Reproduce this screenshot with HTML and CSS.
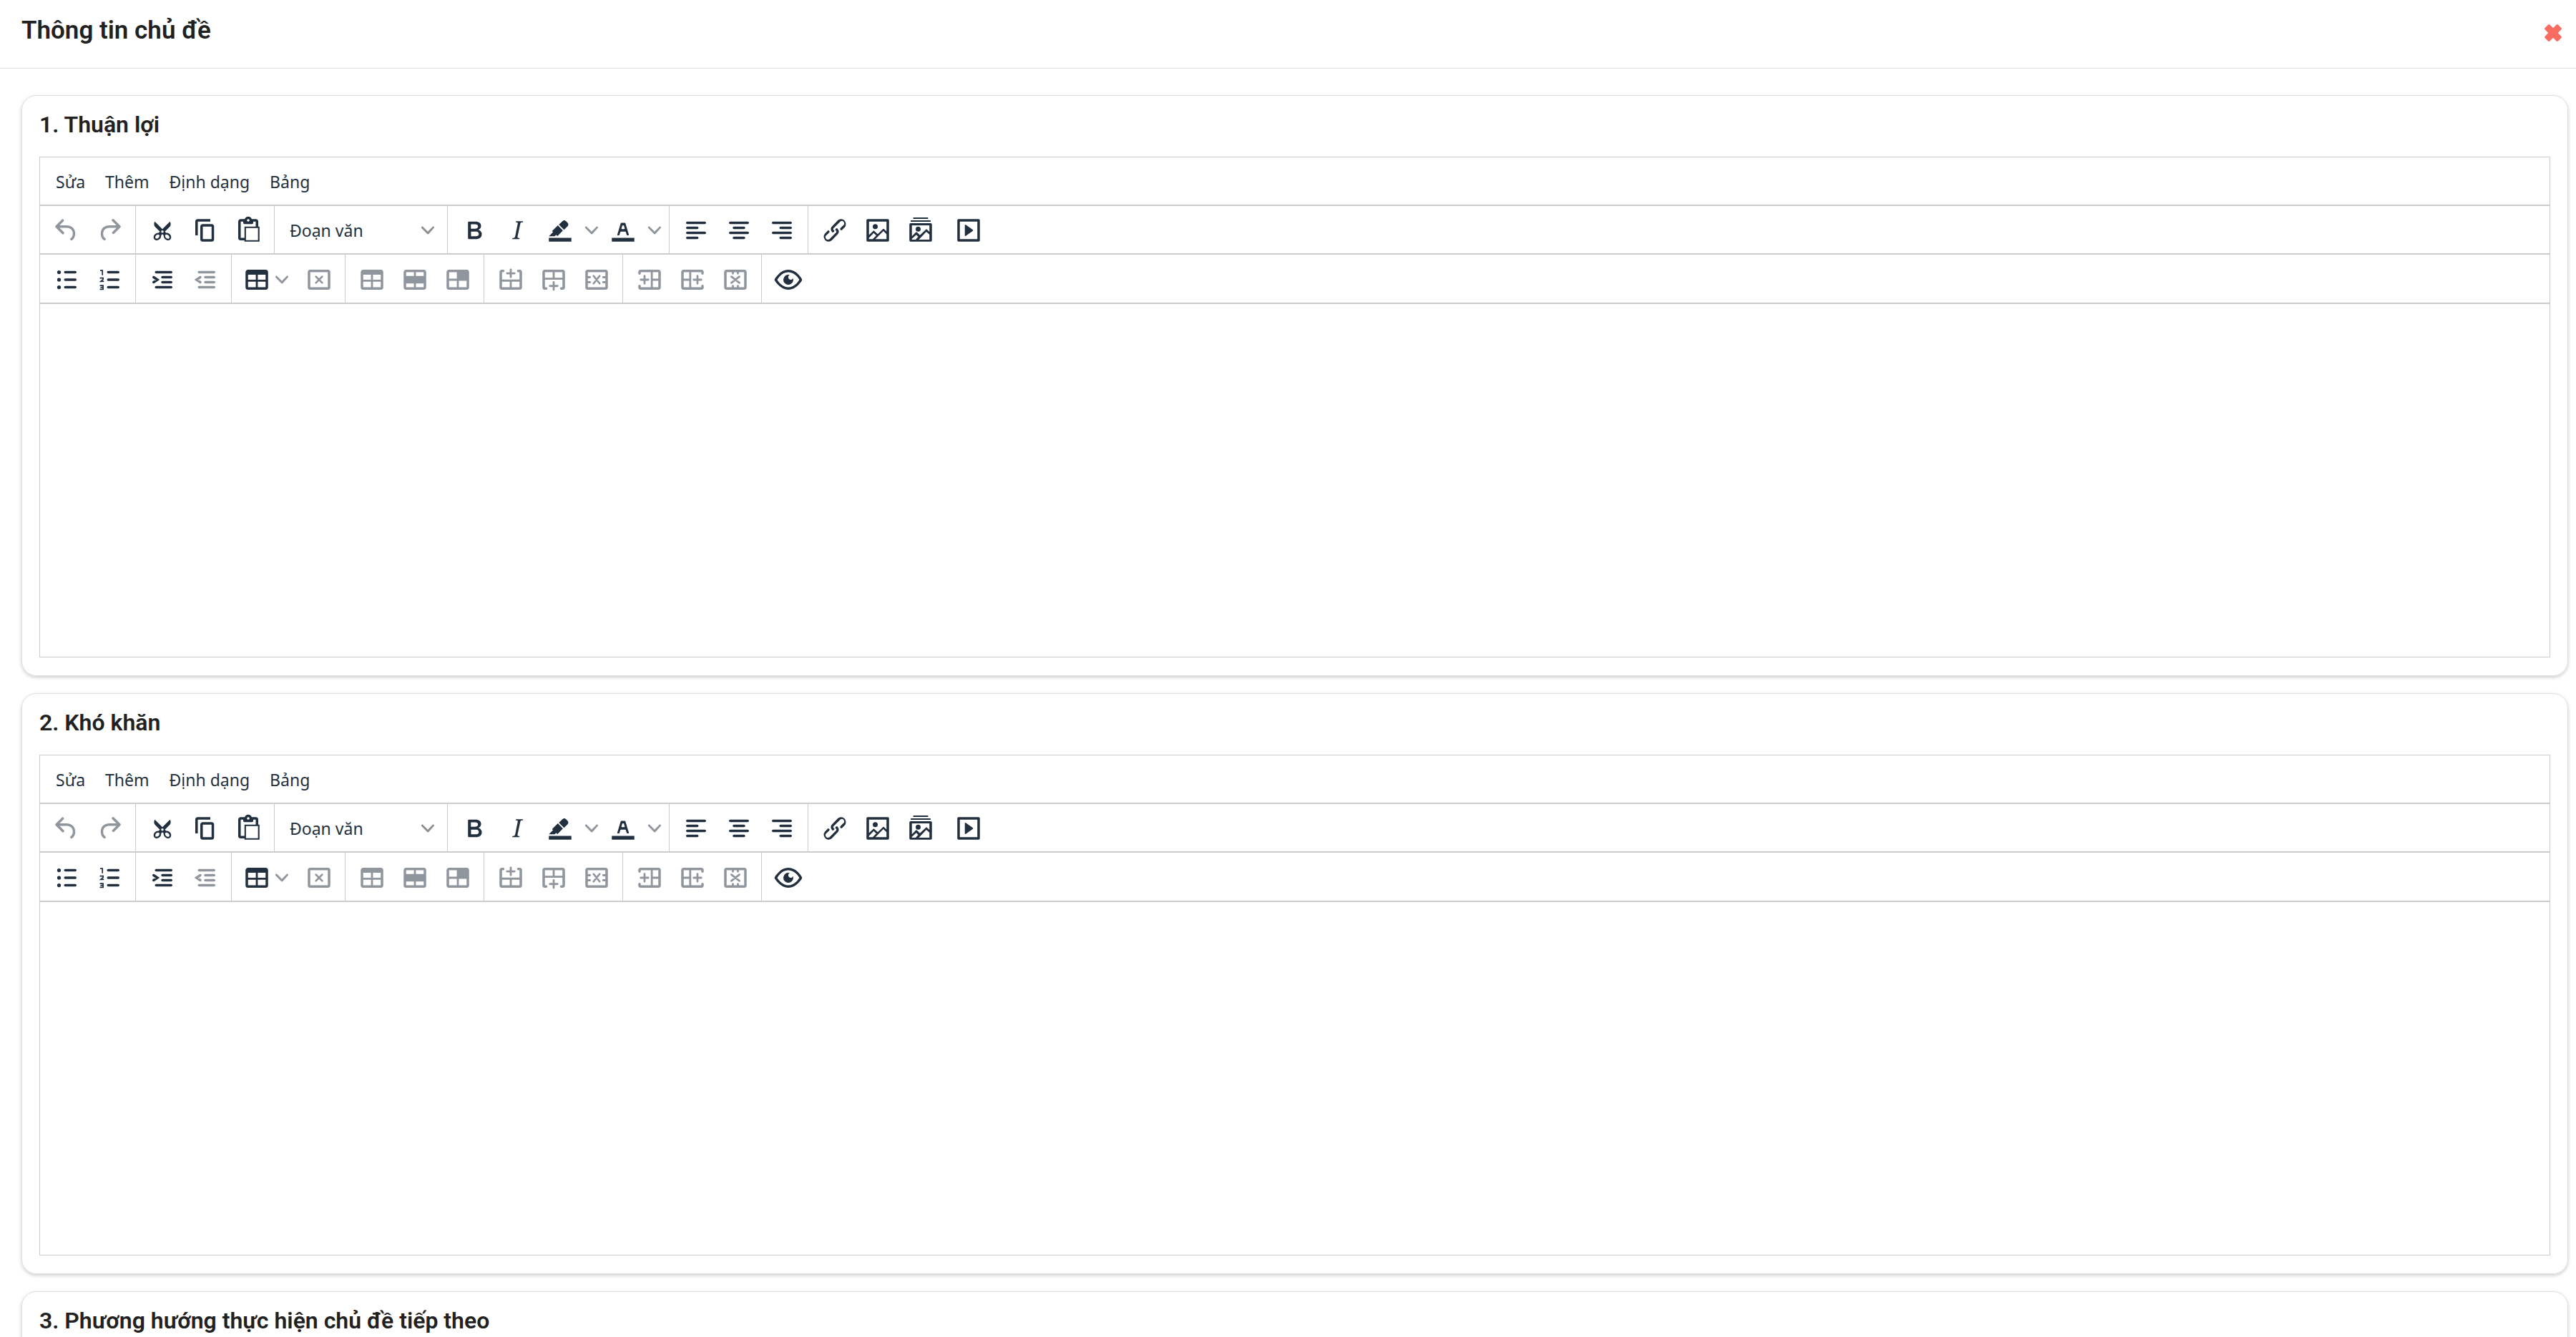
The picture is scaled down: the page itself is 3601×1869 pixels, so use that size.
FILE: index.html
```html
<!DOCTYPE html>
<html lang="vi">

<head>
    <meta charset="UTF-8">
    <meta name="viewport" content="width=device-width, initial-scale=1.0">
    <title>Thông tin chủ đề</title>
    <link rel="stylesheet" href="styles.css">
</head>

<body>
    <!-- Icons -->
    <svg class="sprite" aria-hidden="true">
        <symbol id="close" viewBox="0 0 24 24"><g transform="rotate(45 12 12)"><rect x="-1" y="7.2" width="26" height="9.6" rx="2"/><rect x="7.2" y="-1" width="9.6" height="26" rx="2"/></g></symbol>
        <symbol id="chevron" viewBox="0 0 10 10"><path d="M8.7 2.2c.3-.3.8-.3 1 0 .4.4.4.9 0 1.2L5.7 7.8c-.3.3-.9.3-1.2 0L.2 3.4a.8.8 0 010-1.2c.3-.3.8-.3 1.1 0L5 6l3.7-3.8z"/></symbol>
        <symbol id="undo" viewBox="0 0 24 24"><path d="M6.4 8H12c3.7 0 6.2 2 6.8 5.1.6 2.7-.4 5.6-2.3 6.8a1 1 0 01-1-1.8c1.1-.6 1.8-2.7 1.4-4.6-.5-2.1-2.1-3.5-4.9-3.5H6.4l3.3 3.3a1 1 0 11-1.4 1.4l-5-5a1 1 0 010-1.4l5-5a1 1 0 011.4 1.4L6.4 8z"/></symbol>
        <symbol id="redo" viewBox="0 0 24 24"><path d="M17.6 10H12c-2.8 0-4.4 1.4-4.9 3.5-.4 2 .3 4 1.4 4.6a1 1 0 11-1 1.8c-2-1.2-2.9-4.1-2.3-6.8.6-3 3-5.1 6.8-5.1h5.6l-3.3-3.3a1 1 0 111.4-1.4l5 5a1 1 0 010 1.4l-5 5a1 1 0 01-1.4-1.4l3.3-3.3z"/></symbol>
        <symbol id="cut" viewBox="0 0 24 24"><path fill-rule="evenodd" d="M18 15c.6.7 1 1.4 1 2.3 0 .8-.2 1.5-.7 2l-.8.5-1 .2c-.4 0-.8 0-1.2-.3a3.9 3.9 0 01-2.1-2.2c-.2-.5-.3-1-.2-1.5l-1-1-1 1c0 .5 0 1-.2 1.5-.1.5-.4 1-.9 1.4-.3.4-.7.6-1.2.8l-1.2.3c-.4 0-.7 0-1-.2-.3 0-.6-.3-.8-.5-.5-.5-.8-1.2-.7-2 0-.9.4-1.6 1-2.2A3.7 3.7 0 018.6 14H9l1-1-4-4-.5-1a3.3 3.3 0 010-2c0-.4.3-.7.5-1l6 6 6-6 .5 1a3.3 3.3 0 010 2c0 .4-.3.7-.5 1l-4 4 1 1h.5c.4 0 .8 0 1.2.3.5.2.9.4 1.2.8zM9.5 17.2l.1-.7v-.4a1 1 0 00-.2-.5 1 1 0 00-.4-.2 1.6 1.6 0 00-.8 0 2.6 2.6 0 00-.8.3 2.5 2.5 0 00-.9 1.1l-.1.4v.7l.2.5.5.2h.7a2.5 2.5 0 00.8-.3 2.8 2.8 0 00.9-1.1zm2.5-3.2a1 1 0 100-2 1 1 0 000 2zm5.4 4.4l.2-.5v-.7a2.4 2.4 0 00-.4-.7 2.5 2.5 0 00-.8-.8 2.6 2.6 0 00-.8-.3 1.6 1.6 0 00-.8 0 1 1 0 00-.4.2.9.9 0 00-.2.5v.8a2.8 2.8 0 001 1.4 2.5 2.5 0 001.3.4h.4l.5-.3z"/></symbol>
        <symbol id="copy" viewBox="0 0 24 24"><path d="M16 3H6a2 2 0 00-2 2v11h2V5h10V3zm1 4a2 2 0 012 2v10a2 2 0 01-2 2h-7a2 2 0 01-2-2V9c0-1.2.9-2 2-2h7zm0 12V9h-7v10h7z"/></symbol>
        <symbol id="paste" viewBox="0 0 24 24"><path fill-rule="evenodd" d="M18 9V5h-2v1c0 .6-.4 1-1 1H9a1 1 0 01-1-1V5H6v13h3V9h9zM9 20H6a2 2 0 01-2-2V5c0-1.1.9-2 2-2h3.2A3 3 0 0112 1a3 3 0 012.8 2H18a2 2 0 012 2v4h1v12H9v-1zm1.2-9.8v9.600h9.600v-9.600h-9.600zM12 3a1 1 0 00-1 1c0 .5.4 1 1 1s1-.5 1-1-.4-1-1-1z"/></symbol>
        <symbol id="bold" viewBox="0 0 24 24"><path fill-rule="evenodd" d="M7.8 19c-.3 0-.5 0-.6-.2l-.2-.5V5.7c0-.2 0-.4.2-.5l.6-.2h5c1.5 0 2.7.3 3.5 1 .7.6 1.1 1.4 1.1 2.5a3 3 0 01-.6 1.9c-.4.6-1 1-1.6 1.2.4.1.9.3 1.3.6s.8.7 1 1.2c.4.4.5 1 .5 1.6 0 1.3-.4 2.3-1.3 3-.8.7-2.1 1-3.8 1H7.8zm5-8.3c.6 0 1.2-.1 1.6-.5.4-.3.6-.7.6-1.3 0-1.1-.8-1.7-2.3-1.7H9.3v3.500h3.500zm.5 6c.7 0 1.3-.1 1.7-.4.4-.4.6-.9.6-1.5s-.2-1-.7-1.4c-.4-.3-1-.4-2-.4H9.400v3.700h3.900z"/></symbol>
        <symbol id="italic" viewBox="0 0 24 24"><path d="M16.7 4.7l-.1.9h-.3c-.6 0-1 0-1.4.3-.3.3-.4.6-.5 1.1l-2.1 9.8v.6c0 .5.4.8 1.4.8h.2l-.2.8H8l.2-.8h.2c1.1 0 1.8-.5 2-1.5l2-9.8.1-.5c0-.6-.4-.8-1.4-.8h-.3l.2-.9h5.7z"/></symbol>
        <symbol id="highlight" viewBox="0 0 24 24"><path d="M3 18h18v3H3zM7.7 16.7H3l3.3-3.3-.7-.8L10.2 8l4 4.1-4 4.2c-.2.2-.6.2-.8 0l-.6-.7-1.1 1.1zM11 7.4l3-2.9a2 2 0 012.6 0L18 6c.7.7.7 2 0 2.7l-2.9 2.9L11 7.4z"/></symbol>
        <symbol id="color" viewBox="0 0 24 24"><path fill-rule="evenodd" d="M3 18h18v3H3zM8.7 16h-.8a.5.5 0 01-.5-.6l2.7-9c.1-.3.3-.4.5-.4h2.8c.2 0 .4.1.5.4l2.7 9a.5.5 0 01-.5.6h-.8a.5.5 0 01-.4-.4l-.7-2.2c0-.3-.3-.4-.5-.4h-3.4c-.2 0-.4.1-.5.4l-.7 2.2c0 .3-.2.4-.4.4zm2.6-7.6l-.6 2a.5.5 0 00.5.6h1.6a.5.5 0 00.5-.6l-.6-2c0-.3-.3-.4-.5-.4h-.4c-.2 0-.4.1-.5.4z"/></symbol>
        <symbol id="left" viewBox="0 0 24 24"><path class="line" d="M5 6h14M5 10h8M5 14h14M5 18h8"/></symbol>
        <symbol id="center" viewBox="0 0 24 24"><path class="line" d="M5 6h14M8 10h8M5 14h14M8 18h8"/></symbol>
        <symbol id="right" viewBox="0 0 24 24"><path class="line" d="M5 6h14M11 10h8M5 14h14M11 18h8"/></symbol>
        <symbol id="link" viewBox="0 0 24 24"><path d="M6.2 12.3a1 1 0 011.4 1.4l-2.1 2a2 2 0 102.7 2.8l4.8-4.8a1 1 0 000-1.4 1 1 0 111.4-1.3 2.9 2.9 0 010 4L9.6 20a3.9 3.9 0 01-5.5-5.5l2-2zm11.6-.6a1 1 0 01-1.4-1.4l2-2a2 2 0 10-2.6-2.8L11 10.3a1 1 0 000 1.4A1 1 0 119.6 13a2.9 2.9 0 010-4L14.4 4a3.9 3.9 0 015.5 5.5l-2 2z"/></symbol>
        <symbol id="image" viewBox="0 0 24 24"><path fill-rule="evenodd" d="M5 15.7l3.3-3.2c.3-.3.7-.3 1 0L12 15l4.1-4c.3-.4.8-.4 1 0l1.9 1.9V5H5v10.7zM5 18v1h3l2.8-2.9-2-2L5 18zm14-3l-2.5-2.4-6.4 6.4H19v-4zM4 3h16c.6 0 1 .4 1 1v16c0 .6-.4 1-1 1H4a1 1 0 01-1-1V4c0-.6.4-1 1-1zm6 8a2 2 0 100-4 2 2 0 000 4z"/></symbol>
        <symbol id="gallery" viewBox="0 0 24 24"><path fill-rule="evenodd" d="M5 16.7l3.1-3.1c.3-.3.7-.3 1 0l2.3 2.3 4.7-4.5c.3-.3.8-.3 1 0l1.9 1.8V8H5v8.7zm0 2v.7h3l2-2.2-1.5-1.7L5 18.7zm14-3.4l-2.5-2.2-6 6.3H19v-4.1zM4 6.300h16c.6 0 1 .4 1 1V20c0 .6-.4 1-1 1H4a1 1 0 01-1-1V7.300c0-.6.4-1 1-1zm6 6.700a2 2 0 100-4 2 2 0 000 4z"/><rect x="4" y="4" width="16" height="1.200" rx=".4"/><rect x="6" y="1.700" width="12" height="1.200" rx=".4"/></symbol>
        <symbol id="media" viewBox="0 0 24 24"><path fill-rule="evenodd" d="M4 3h16c.6 0 1 .4 1 1v16c0 .6-.4 1-1 1H4a1 1 0 01-1-1V4c0-.6.4-1 1-1zm1 2v14h14V5H5zm4.8 2.6l5.6 4a.5.5 0 010 .8l-5.6 4A.5.5 0 019 16V8a.5.5 0 01.8-.4z"/></symbol>
        <symbol id="bullets" viewBox="0 0 24 24"><path class="line" d="M11 6h8M11 12h8M11 18h8"/><circle cx="6" cy="6" r="1.5"/><circle cx="6" cy="12" r="1.5"/><circle cx="6" cy="18" r="1.5"/></symbol>
        <symbol id="numbers" viewBox="0 0 24 24"><path class="line" d="M11 6h8M11 12h8M11 18h8"/><path class="digit" d="M5 4.7h1.4V8M4.7 10.7h2.2v1.1l-1.8 1.5h2.1M4.7 16.6h2.2v3.1H4.7M5.2 18.1h1.7"/></symbol>
        <symbol id="indent" viewBox="0 0 24 24"><path class="line" d="M7 6h12M12 10h7M12 14h7M7 18h12M5 10l3 2-3 2"/></symbol>
        <symbol id="outdent" viewBox="0 0 24 24"><path class="line" d="M7 6h12M12 10h7M12 14h7M7 18h12M8 10l-3 2 3 2"/></symbol>
        <symbol id="table" viewBox="0 0 24 24"><path fill-rule="evenodd" d="M5 4h14a2 2 0 012 2v12a2 2 0 01-2 2H5a2 2 0 01-2-2V6c0-1.100.9-2 2-2zM5 8v4h6.200V8zm7.800 0v4H19V8zM5 13.600V18h6.200v-4.400zm7.800 0V18H19v-4.400z"/></symbol>
        <symbol id="tabledelete" viewBox="0 0 24 24"><rect class="frame" x="4" y="5" width="16" height="14" rx="1"/><path class="thin" d="M9.500 9.500l5 5M14.500 9.500l-5 5"/></symbol>
        <symbol id="rowprops" viewBox="0 0 24 24"><path fill-rule="evenodd" d="M5 4h14a2 2 0 012 2v12a2 2 0 01-2 2H5a2 2 0 01-2-2V6c0-1.100.9-2 2-2zM5 6v3h6.200V6zm7.800 0v3H19V6zM5 15v3h6.200v-3zm7.800 0v3H19v-3z"/></symbol>
        <symbol id="cellprops" viewBox="0 0 24 24"><path fill-rule="evenodd" d="M5 4h14a2 2 0 012 2v12a2 2 0 01-2 2H5a2 2 0 01-2-2V6c0-1.100.9-2 2-2zM5 6v5.200h6.200V6zM5 12.800V18h6.200v-5.200zm7.800 0V18H19v-5.200z"/></symbol>
        <symbol id="rowabove" viewBox="0 0 24 24"><path class="frame" d="M6 5H5a1 1 0 00-1 1v12a1 1 0 001 1h14a1 1 0 001-1V6a1 1 0 00-1-1h-1"/><path class="thin" d="M4 12.700h16M12 13v5M9 6.900h6M12 3.900v6"/></symbol>
        <symbol id="rowbelow" viewBox="0 0 24 24"><path class="frame" d="M6 19H5a1 1 0 01-1-1V6a1 1 0 011-1h14a1 1 0 011 1v12a1 1 0 01-1 1h-1"/><path class="thin" d="M4 11.200h16M12 11V6M9 17h6M12 14v6"/></symbol>
        <symbol id="rowdelete" viewBox="0 0 24 24"><rect class="frame" x="4" y="5" width="16" height="14" rx="1"/><path class="thin" d="M4.500 10h2.200M4.500 14h2.200M17.300 10h2.200M17.300 14h2.200M9.600 9l4.800 6M14.400 9l-4.800 6"/></symbol>
        <symbol id="colbefore" viewBox="0 0 24 24"><path class="frame" d="M4 7V6a1 1 0 011-1h14a1 1 0 011 1v12a1 1 0 01-1 1H5a1 1 0 01-1-1v-1"/><path class="thin" d="M13.800 5v14M14 12h6M5 12h6M8 9v6"/></symbol>
        <symbol id="colafter" viewBox="0 0 24 24"><path class="frame" d="M20 7V6a1 1 0 00-1-1H5a1 1 0 00-1 1v12a1 1 0 001 1h14a1 1 0 001-1v-1"/><path class="thin" d="M10.200 5v14M10 12H4M13 12h6M16 9v6"/></symbol>
        <symbol id="coldelete" viewBox="0 0 24 24"><rect class="frame" x="4" y="5" width="16" height="14" rx="1"/><path class="thin" d="M10 5.500V7M14 5.500V7M10 17v1.500M14 17v1.500M8.800 9.500l6.400 5M15.200 9.500l-6.400 5"/></symbol>
        <symbol id="preview" viewBox="0 0 24 24"><path fill-rule="evenodd" d="M3.500 12.500c.5.8 1.100 1.600 1.800 2.300 2 2 4.200 3.200 6.700 3.200s4.700-1.200 6.700-3.200a16.200 16.200 0 002.100-2.800 15.700 15.700 0 00-2.100-2.800c-2-2-4.200-3.200-6.700-3.200a9.300 9.300 0 00-6.700 3.200A16.200 16.200 0 003.200 12c0 .2.2.3.3.5zm-2.400-1l.7-1.200L4 7.800C6.200 5.400 8.900 4 12 4c3 0 5.800 1.400 8.100 3.800a18.200 18.200 0 012.800 3.700v1l-.7 1.200-2.100 2.500c-2.300 2.400-5 3.800-8.100 3.800-3 0-5.800-1.400-8.100-3.800a18.200 18.200 0 01-2.800-3.700 1 1 0 010-1zm12-3.300a2 2 0 102.700 2.600 4 4 0 11-2.700-2.600z"/></symbol>
    </svg>

    <div class="modal">
        <header class="modal-header">
            <h1 class="modal-title">Thông tin chủ đề</h1>
            <button class="close-button" type="button" aria-label="Đóng"><svg><use href="#close"/></svg></button>
        </header>
        <main class="modal-body">
            <section class="card">
                <h2 class="card-title"><label for="advantages">1. Thuận lợi</label></h2>
                <div class="editor" data-field="advantages"></div>
            </section>
            <section class="card">
                <h2 class="card-title"><label for="difficulties">2. Khó khăn</label></h2>
                <div class="editor" data-field="difficulties"></div>
            </section>
            <section class="card">
                <h2 class="card-title"><label for="direction">3. Phương hướng thực hiện chủ đề tiếp theo</label></h2>
                <div class="editor"><textarea class="edit-area" id="direction"></textarea></div>
            </section>
        </main>
    </div>

    <script>
        const menus = ["Sửa", "Thêm", "Định dạng", "Bảng"];

        // [icon, label, type] - type is "off" (disabled), "split" or "menu"
        const toolbars = [
            [
                [["undo", "Hoàn tác", "off"], ["redo", "Làm lại", "off"]],
                [["cut", "Cắt"], ["copy", "Sao chép"], ["paste", "Dán"]],
                "blocks",
                [["bold", "In đậm"], ["italic", "In nghiêng"], ["highlight", "Màu nền", "split"], ["color", "Màu chữ", "split"]],
                [["left", "Canh trái"], ["center", "Canh giữa"], ["right", "Canh phải"]],
                [["link", "Liên kết"], ["image", "Hình ảnh"], ["gallery", "Thư viện ảnh"]],
                [["media", "Video"]]
            ],
            [
                [["bullets", "Danh sách"], ["numbers", "Danh sách số"]],
                [["indent", "Tăng thụt dòng"], ["outdent", "Giảm thụt dòng", "off"]],
                [["table", "Bảng", "menu"], ["tabledelete", "Xóa bảng", "off"]],
                [["table", "Thuộc tính bảng", "off"], ["rowprops", "Thuộc tính hàng", "off"], ["cellprops", "Thuộc tính ô", "off"]],
                [["rowabove", "Chèn hàng trên", "off"], ["rowbelow", "Chèn hàng dưới", "off"], ["rowdelete", "Xóa hàng", "off"]],
                [["colbefore", "Chèn cột trước", "off"], ["colafter", "Chèn cột sau", "off"], ["coldelete", "Xóa cột", "off"]],
                [["preview", "Xem trước"]]
            ]
        ];

        const chevron = '<svg class="chevron"><use href="#chevron"/></svg>';

        function renderButton([icon, label, type]) {
            const svg = `<svg class="icon"><use href="#${icon}"/></svg>`;
            if (type === "menu") {
                return `<button type="button" class="tool tool-menu" aria-label="${label}">${svg}${chevron}</button>`;
            }
            let html = `<button type="button" class="tool" aria-label="${label}" ${type === "off" ? "disabled" : ""}>${svg}</button>`;
            if (type === "split") {
                html += `<button type="button" class="tool tool-arrow" aria-label="Chọn ${label}">${chevron}</button>`;
            }
            return html;
        }

        function renderGroup(group) {
            if (group === "blocks") {
                return `<div class="group"><div class="blocks"><select aria-label="Kiểu đoạn"><option>Đoạn văn</option></select>${chevron}</div></div>`;
            }
            const open = group[0][0] === "link" ? "group-open" : "";
            return `<div class="group ${open}">${group.map(renderButton).join("")}</div>`;
        }

        document.querySelectorAll(".editor[data-field]").forEach((editor) => {
            const menubar = menus.map((name) => `<button type="button" class="menu-button">${name}</button>`).join("");
            const rows = toolbars.map((row) => `<div class="toolbar">${row.map(renderGroup).join("")}</div>`).join("");
            editor.innerHTML = `<div class="menubar">${menubar}</div>${rows}<textarea class="edit-area" id="${editor.dataset.field}"></textarea>`;
        });
    </script>
</body>

</html>
```
FILE: styles.css
```css
* {
    box-sizing: border-box;
}

body {
    margin: 0;
    font-family: Roboto, sans-serif;
    color: #212121;
    background-color: #fff;
}

button,
select,
textarea {
    margin: 0;
    padding: 0;
    border: 0;
    background: none;
    font-family: "Noto Sans", sans-serif;
    font-size: 23px;
    color: #222f3e;
}

svg {
    display: block;
    fill: currentColor;
}

.sprite {
    position: absolute;
    width: 0;
    height: 0;
}

.line,
.thin,
.frame,
.digit {
    fill: none;
    stroke: currentColor;
    stroke-width: 2;
    stroke-linecap: round;
}

.thin {
    stroke-width: 1.6;
}

.digit {
    stroke-width: 1;
}

/* Modal */
.modal {
    height: 100vh;
    overflow: hidden;
}

.modal-header {
    display: flex;
    justify-content: space-between;
    align-items: center;
    height: 96px;
    padding: 0 20px 10px 30px;
    border-bottom: 1px solid #dee2e6;
}

.modal-title {
    margin: 0;
    font-size: 35px;
    font-weight: 600;
    line-height: 42px;
}

.close-button {
    padding: 6px 0 0;
    color: #f86c61;
}

.close-button svg {
    width: 24px;
    height: 24px;
}

.modal-body {
    display: flex;
    flex-direction: column;
    gap: 24px;
    padding: 37px 11px 24px 30px;
}

/* Card */
.card {
    padding: 12px 24px 25px;
    border: 1px solid #dee0e2;
    border-radius: 21px;
    box-shadow: 0 2px 5px rgba(0, 0, 0, 0.2);
}

.card-title {
    margin: 0 0 17px;
    font-size: 32px;
    font-weight: 600;
    line-height: 56px;
}

/* Editor */
.editor {
    display: flex;
    flex-direction: column;
    height: 700px;
    border: 1px solid #ccc;
}

.menubar {
    display: flex;
    align-items: center;
    height: 68px;
    padding: 0 8px;
    box-shadow: inset 0 -2px #ccc;
}

.menu-button {
    height: 60px;
    padding: 0 14px;
}

.toolbar {
    display: flex;
    height: 68px;
    box-shadow: inset 0 -2px #ccc;
}

.toolbar + .toolbar {
    height: 69px;
}

.group {
    display: flex;
    align-items: center;
    padding: 0 6px 0 7px;
    border-right: 1px solid #ccc;
}

.group:last-child,
.group-open {
    padding-right: 0;
    border-right: 0;
}

.tool {
    display: flex;
    align-items: center;
    justify-content: center;
    width: 60px;
    height: 60px;
}

.tool:disabled {
    opacity: 0.5;
}

.tool-arrow {
    width: 28px;
}

.tool-menu {
    justify-content: flex-start;
    gap: 5px;
    width: 85px;
    padding: 0 7px;
}

.icon {
    flex-shrink: 0;
    width: 42px;
    height: 42px;
}

.chevron {
    width: 18px;
    height: 18px;
    opacity: 0.5;
}

.blocks {
    display: grid;
    align-items: center;
    width: 228px;
}

.blocks select,
.blocks .chevron {
    grid-area: 1 / 1;
}

.blocks select {
    appearance: none;
    height: 60px;
    padding: 0 14px;
}

.blocks .chevron {
    justify-self: end;
    margin-right: 12px;
    pointer-events: none;
}

.edit-area {
    flex: 1;
    width: 100%;
    padding: 16px;
    resize: none;
}
```
